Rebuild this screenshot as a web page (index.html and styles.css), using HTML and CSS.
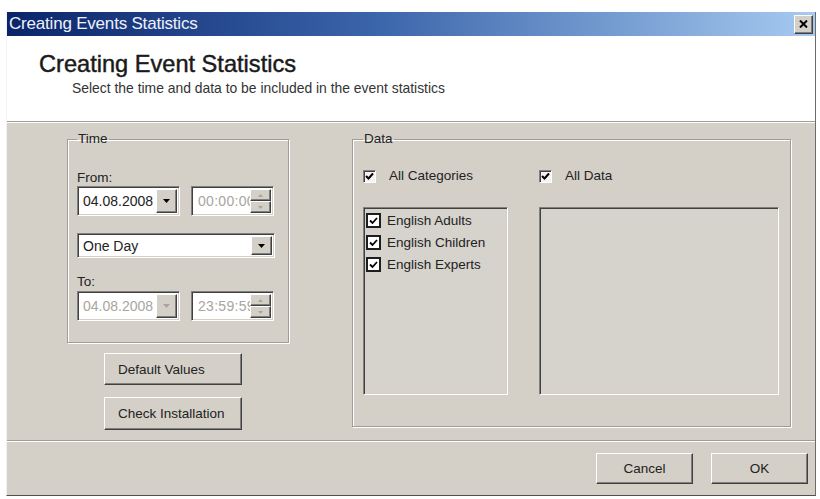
FILE: index.html
```html
<!DOCTYPE html>
<html lang="en">
<head>
  <meta charset="UTF-8" />
  <title>Creating Events Statistics</title>
  <link rel="stylesheet" href="styles.css">
</head>
<body>
  <div class="window">
    <div class="titlebar">
      <span class="titlebar-text">Creating Events Statistics</span>
      <button type="button" class="close-btn" title="Close">
        <svg width="9" height="8" viewBox="0 0 9 8"><path d="M1 0.5 L8 7.5 M8 0.5 L1 7.5" stroke="#000" stroke-width="2" fill="none"/></svg>
      </button>
    </div>

    <div class="header">
      <h1 class="header-title">Creating Event Statistics</h1>
      <p class="header-sub">Select the time and data to be included in the event statistics</p>
    </div>

    <div class="main">
      <div class="left-col">
        <fieldset class="group time-group">
          <legend>Time</legend>

          <div class="field-label">From:</div>
          <div class="field-row">
            <div class="field date-field">
              <span class="field-text">04.08.2008</span>
              <span class="drop-btn"><svg width="7" height="4" viewBox="0 0 7 4"><path d="M0 0h7L3.5 4z" fill="#000"/></svg></span>
            </div>
            <div class="field spin-field disabled">
              <span class="field-text">00:00:00</span>
              <span class="spin-btns">
                <span class="spin-btn"><svg width="5" height="3" viewBox="0 0 5 3"><path d="M0 3h5L2.5 0z" fill="#a8a59e"/></svg></span>
                <span class="spin-btn"><svg width="5" height="3" viewBox="0 0 5 3"><path d="M0 0h5L2.5 3z" fill="#a8a59e"/></svg></span>
              </span>
            </div>
          </div>

          <div class="field range-field">
            <span class="field-text">One Day</span>
            <span class="drop-btn"><svg width="7" height="4" viewBox="0 0 7 4"><path d="M0 0h7L3.5 4z" fill="#000"/></svg></span>
          </div>

          <div class="field-label to-label">To:</div>
          <div class="field-row to-row">
            <div class="field date-field disabled">
              <span class="field-text">04.08.2008</span>
              <span class="drop-btn"><svg width="7" height="4" viewBox="0 0 7 4"><path d="M0 0h7L3.5 4z" fill="#a8a59e"/></svg></span>
            </div>
            <div class="field spin-field disabled">
              <span class="field-text">23:59:59</span>
              <span class="spin-btns">
                <span class="spin-btn"><svg width="5" height="3" viewBox="0 0 5 3"><path d="M0 3h5L2.5 0z" fill="#a8a59e"/></svg></span>
                <span class="spin-btn"><svg width="5" height="3" viewBox="0 0 5 3"><path d="M0 0h5L2.5 3z" fill="#a8a59e"/></svg></span>
              </span>
            </div>
          </div>
        </fieldset>

        <button type="button" class="btn side-btn">Default Values</button>
        <button type="button" class="btn side-btn check-btn">Check Installation</button>
      </div>

      <fieldset class="group data-group">
        <legend>Data</legend>

        <label class="check">
          <span class="check-box"><svg width="9" height="9" viewBox="0 0 9 9"><path d="M1 4 L3.5 6.5 L8 1.5" stroke="#000" stroke-width="2" fill="none"/></svg></span>
          All Categories
        </label>
        <label class="check">
          <span class="check-box"><svg width="9" height="9" viewBox="0 0 9 9"><path d="M1 4 L3.5 6.5 L8 1.5" stroke="#000" stroke-width="2" fill="none"/></svg></span>
          All Data
        </label>

        <div class="listbox">
          <div class="list-item">
            <span class="item-box"><svg width="9" height="9" viewBox="0 0 9 9"><path d="M1 4.5 L3.5 7 L8 2" stroke="#000" stroke-width="1.8" fill="none"/></svg></span>
            English Adults
          </div>
          <div class="list-item">
            <span class="item-box"><svg width="9" height="9" viewBox="0 0 9 9"><path d="M1 4.5 L3.5 7 L8 2" stroke="#000" stroke-width="1.8" fill="none"/></svg></span>
            English Children
          </div>
          <div class="list-item">
            <span class="item-box"><svg width="9" height="9" viewBox="0 0 9 9"><path d="M1 4.5 L3.5 7 L8 2" stroke="#000" stroke-width="1.8" fill="none"/></svg></span>
            English Experts
          </div>
        </div>
        <div class="listbox"></div>
      </fieldset>
    </div>

    <div class="footer">
      <button type="button" class="btn footer-btn">Cancel</button>
      <button type="button" class="btn footer-btn">OK</button>
    </div>
  </div>
</body>
</html>
```

FILE: styles.css
```css
* {
  box-sizing: border-box;
}

body {
  margin: 0;
  background: #fff;
  color: #222;
  font-family: 'Liberation Sans', Arial, sans-serif;
  font-size: 13.5px;
}

/* Dialog frame */
.window {
  margin: 12px 0 0 6px;
  width: 810px;
  background: #d4d0c8;
  border-left: 1px solid #f2f2f2;
  border-right: 1px solid #6c6c6c;
  border-bottom: 1px solid #505050;
}

.titlebar {
  height: 24px;
  display: flex;
  align-items: center;
  justify-content: space-between;
  padding: 0 2px 0 2px;
  background: linear-gradient(to right, #0a246a, #3a64aa 45%, #a6caf0);
}

.titlebar-text {
  color: #eef2f8;
  font-size: 17px;
  letter-spacing: -0.2px;
}

.close-btn {
  width: 19px;
  height: 19px;
  padding: 0;
  display: flex;
  align-items: center;
  justify-content: center;
  background: #d4d0c8;
  border: 1px solid;
  border-color: #fff #404040 #404040 #fff;
  box-shadow: inset -1px -1px #808080;
}

/* White banner */
.header {
  height: 86px;
  background: #fff;
  padding: 16px 0 0 32px;
  border-bottom: 1px solid #a09d96;
}

.header-title {
  margin: 0;
  font-size: 23.6px;
  font-weight: normal;
  line-height: 24px;
  color: #1a1a1a;
  -webkit-text-stroke: 0.45px #1a1a1a;
}

.header-sub {
  margin: 4px 0 0 33px;
  font-size: 13.9px;
  line-height: 16px;
  color: #333;
}

/* Body */
.main {
  height: 319px;
  display: flex;
  align-items: flex-start;
  padding: 9px 0 0 60px;
  border-bottom: 1px solid #a09d96;
  box-shadow: inset 0 1px #fff;
}

.left-col {
  display: flex;
  flex-direction: column;
  align-items: flex-start;
}

.group {
  margin: 0;
  min-width: 0;
  border: 1px solid #a09d96;
  box-shadow: inset 1px 1px #fff, 1px 1px #fff;
}

.group legend {
  padding: 0 1px;
  line-height: 16px;
  color: #222;
}

.time-group {
  width: 222px;
  padding: 23px 13px 21px 9px;
}

.field-label {
  line-height: 16px;
}

.to-label {
  margin-top: 16px;
}

.field-row {
  display: flex;
  gap: 11px;
  height: 30px;
}

.to-row {
  margin-top: 1px;
}

/* Sunken edit / combo fields */
.field {
  display: flex;
  padding: 2px;
  font-size: 14px;
  background: #fff;
  border: 1px solid;
  border-color: #808080 #fff #fff #808080;
  box-shadow: inset 1px 1px #404040, inset -1px -1px #d4d0c8;
  overflow: hidden;
}

.field-text {
  flex: 1;
  display: flex;
  align-items: center;
  padding-left: 3px;
  white-space: nowrap;
  overflow: hidden;
  min-width: 0;
}

.disabled .field-text {
  color: #a8a59e;
}

.date-field {
  width: 103px;
}

.spin-field {
  width: 83px;
}

.spin-field .field-text {
  padding-left: 4px;
  letter-spacing: 0.3px;
}

.range-field {
  margin-top: 17px;
  height: 25px;
}

.drop-btn,
.spin-btn {
  display: flex;
  align-items: center;
  justify-content: center;
  background: #d4d0c8;
  border: 1px solid;
  border-color: #fff #404040 #404040 #fff;
  box-shadow: inset -1px -1px #808080;
}

.drop-btn {
  width: 21px;
}

.spin-btns {
  width: 21px;
  flex-shrink: 0;
  display: flex;
  flex-direction: column;
}

.spin-btn {
  flex: 1;
}

/* Push buttons */
.btn {
  font-family: inherit;
  font-size: 13.5px;
  color: #222;
  background: #d4d0c8;
  border: 1px solid;
  border-color: #fff #404040 #404040 #fff;
  box-shadow: inset -1px -1px #808080;
  padding: 0;
}

.side-btn {
  width: 138px;
  height: 32px;
  margin: 10px 0 0 37px;
  text-align: left;
  padding-left: 13px;
}

.check-btn {
  margin-top: 12px;
  height: 33px;
}

.data-group {
  width: 439px;
  height: 296px;
  margin-left: 63px;
  padding: 21px 11px 0 10px;
  display: grid;
  grid-template-columns: 145px 240px;
  grid-template-rows: 16px 188px;
  column-gap: 31px;
  row-gap: 23px;
}

.check {
  display: flex;
  align-items: center;
  gap: 13px;
  line-height: 16px;
}

.check-box {
  width: 13px;
  height: 13px;
  display: flex;
  align-items: center;
  justify-content: center;
  background: #f4f3f0;
  border: 1px solid;
  border-color: #808080 #fff #fff #808080;
  box-shadow: inset 1px 1px #404040;
}

.listbox {
  padding: 1px 0 0 2px;
  background: #d6d3cc;
  border: 1px solid;
  border-color: #808080 #fff #fff #808080;
  box-shadow: inset 1px 1px #404040, inset -1px -1px #d4d0c8;
}

.list-item {
  height: 22px;
  display: flex;
  align-items: center;
  gap: 6px;
}

.item-box {
  width: 15px;
  height: 15px;
  display: flex;
  align-items: center;
  justify-content: center;
  background: #fff;
  border: 2px solid #1e1e1e;
}

/* Bottom buttons */
.footer {
  height: 54px;
  display: flex;
  justify-content: flex-end;
  align-items: flex-start;
  gap: 18px;
  padding: 12px 7px 0 0;
  box-shadow: inset 0 1px #fff;
}

.footer-btn {
  width: 97px;
  height: 31px;
}
```
